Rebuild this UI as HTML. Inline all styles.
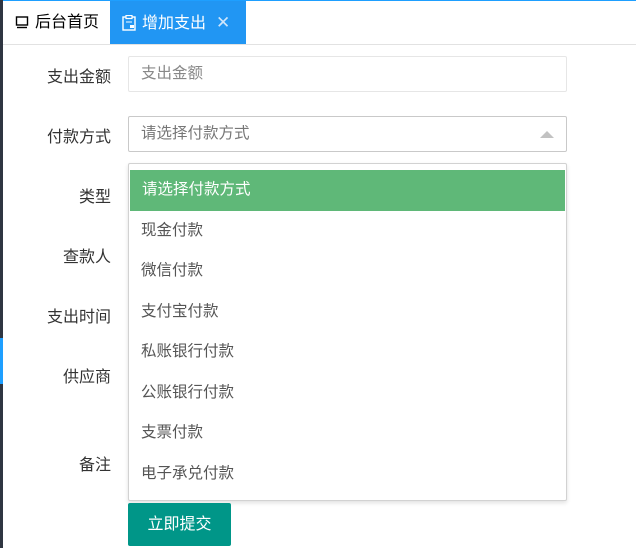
<!DOCTYPE html>
<html><head><meta charset="utf-8"><style>
*{margin:0;padding:0;box-sizing:border-box}
body{width:636px;height:548px;overflow:hidden;background:#fff;font-family:"Liberation Sans","Noto Sans CJK SC",sans-serif;font-size:14px;color:#333;position:relative}
.topline{position:absolute;left:0;top:0;width:636px;height:1px;background:#1e9fff}
.lstrip{position:absolute;left:0;top:0;width:3px;height:548px;background:#2f3541}
.lblue{position:absolute;left:0;top:338px;width:3px;height:46px;background:#1e9fff}
.tabs{position:absolute;left:3px;top:1px;right:0;height:44px;border-bottom:1px solid #e2e2e2}
.t1{position:absolute;left:0;top:0;width:107px;height:43px;line-height:43px;padding-left:12px;font-size:16px;color:#000}
.t2{position:absolute;left:107px;top:0;width:136px;height:43px;line-height:43px;background:#2196f3;color:#fff;padding-left:12px;font-size:16px}
.lab{position:absolute;width:111px;text-align:right;font-size:16px;color:#333}
.inp{position:absolute;left:128px;width:439px;height:36px;border:1px solid #e6e6e6;border-radius:2px;padding-left:12px;line-height:34px;color:#777;font-size:15.5px}
.dd{position:absolute;left:128px;top:163px;width:439px;height:338px;border:1px solid #d2d2d2;border-radius:2px;box-shadow:0 2px 4px rgba(0,0,0,.12);background:#fff;padding-top:6px}
.it{height:40.5px;line-height:40px;padding-left:12px;color:#555;font-size:15.5px}
.it.sel{background:#5fb878;color:#fff;margin:0 1px}
.btn{position:absolute;left:128px;top:503px;width:103px;height:43px;background:#009688;color:#fff;border-radius:2px;text-align:center;line-height:43px;font-size:16px}
</style></head><body>
<div class="topline"></div><div class="lstrip"></div><div class="lblue"></div>
<div class="tabs">
<div class="t1"><svg width="14" height="14" style="vertical-align:-2px;margin-right:6px" viewBox="0 0 14 14"><rect x="1.5" y="2" width="11" height="8" fill="none" stroke="#000" stroke-width="1.4"/><line x1="2" y1="12.5" x2="12" y2="12.5" stroke="#000" stroke-width="1.4"/></svg>后台首页</div>
<div class="t2"><svg width="14" height="16" style="vertical-align:-3px;margin-right:6px" viewBox="0 0 14 16"><rect x="1" y="2" width="12" height="13" fill="none" stroke="#fff" stroke-width="1.4"/><rect x="4" y="0.5" width="6" height="3" fill="#2196f3" stroke="#fff" stroke-width="1.2"/><line x1="4" y1="7" x2="10" y2="7" stroke="#fff"/><rect x="8" y="10" width="4" height="3" fill="#fff"/></svg>增加支出<span style="margin-left:10px;color:#cfe6fb;font-size:17px">✕</span></div>
</div>
<div class="lab" style="top:63px">支出金额</div>
<div class="lab" style="top:123px">付款方式</div>
<div class="lab" style="top:183px">类型</div>
<div class="lab" style="top:243px">查款人</div>
<div class="lab" style="top:303px">支出时间</div>
<div class="lab" style="top:363px">供应商</div>
<div class="lab" style="top:451px">备注</div>
<div class="inp" style="top:56px;color:#888">支出金额</div>
<div class="inp" style="top:116px;border-color:#c9c9c9">请选择付款方式<span style="position:absolute;right:12px;top:14px;width:0;height:0;border-left:7px solid transparent;border-right:7px solid transparent;border-bottom:7px solid #c2c2c2"></span></div>
<div class="dd">
<div class="it sel">请选择付款方式</div>
<div class="it">现金付款</div>
<div class="it">微信付款</div>
<div class="it">支付宝付款</div>
<div class="it">私账银行付款</div>
<div class="it">公账银行付款</div>
<div class="it">支票付款</div>
<div class="it">电子承兑付款</div>
</div>
<div class="btn">立即提交</div>
</body></html>
